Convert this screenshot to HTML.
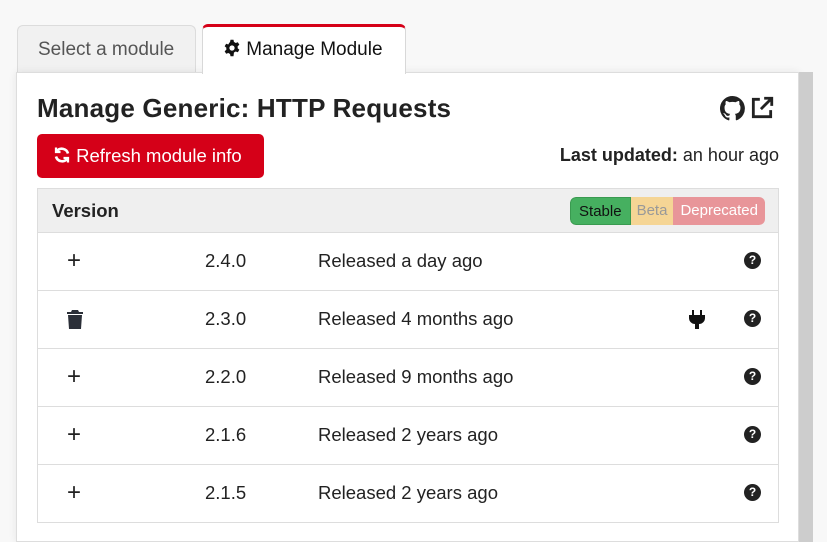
<!DOCTYPE html>
<html><head><style>
*{box-sizing:border-box;margin:0;padding:0}
body{width:827px;height:532px;overflow:hidden;background:#f8f8f8;font-family:"Liberation Sans",sans-serif;color:#222;position:relative}
.abs{position:absolute}
.tab1{left:17px;top:25px;width:179px;height:48px;background:#f1f1f1;border:1px solid #dcdcdc;border-bottom:none;border-radius:6px 6px 0 0;font-size:19px;color:#555;padding-left:20px;line-height:48px}
.tab2{left:202px;top:24px;width:204px;height:50px;background:#fff;border:1px solid #d8d8d8;border-top:3px solid #d50018;border-bottom:none;border-radius:6px 6px 0 0;font-size:19px;color:#111;padding-left:20px;line-height:46px;z-index:2}
.panel{left:16px;top:72px;width:783px;height:470px;background:#fff;border:1px solid #ddd;box-shadow:0 0 8px rgba(0,0,0,.08)}
.stripe{left:799px;top:72px;width:14px;height:470px;background:#cdcdcd}
h1{position:absolute;left:37px;top:93px;font-size:26px;font-weight:bold;color:#222;letter-spacing:.2px}
.btn{left:37px;top:134px;width:227px;height:44px;background:#d50018;border-radius:5px;color:#fff;font-size:18.5px;line-height:44px;padding-left:16px}
.upd{right:48px;top:145px;font-size:18px}
.table{left:37px;top:188px;width:742px;height:335px;border:1px solid #ddd}
.hdr{height:43px;background:#efefef;font-weight:bold;font-size:18.5px;line-height:44px;padding-left:14px;position:relative}
.row{height:58px;border-top:1px solid #ddd;position:relative;font-size:18.5px;line-height:56px}
.row .v{position:absolute;left:167px}
.row .r{position:absolute;left:280px}
.row .ic{position:absolute;left:29px;top:0}
.q{position:absolute;left:706px;top:19px;width:17px;height:17px;border-radius:50%;background:#222;color:#fff;font-size:12px;font-weight:bold;line-height:17px;text-align:center}
.badges{position:absolute;right:13px;top:8px;height:28px;display:flex;font-size:15px;font-weight:normal;line-height:28px;border-radius:6px;overflow:hidden}
</style></head><body>
<div class="abs tab1">Select a module</div>
<div class="abs tab2"><svg width="18" height="18" viewBox="0 0 24 24" style="vertical-align:-2px"><path fill="#111" d="M10 1h4l.6 3a8 8 0 0 1 2.3 1.300l2.900-1 2 3.400-2.300 2a8 8 0 0 1 0 2.600l2.300 2-2 3.400-2.900-1a8 8 0 0 1-2.300 1.300L14 23h-4l-.6-3a8 8 0 0 1-2.300-1.300l-2.900 1-2-3.400 2.300-2a8 8 0 0 1 0-2.600l-2.300-2 2-3.400 2.900 1A8 8 0 0 1 9.400 4zM12 8.500a3.500 3.500 0 1 0 0 7 3.500 3.500 0 0 0 0-7z"/></svg> Manage Module</div>
<div class="abs panel"></div>
<div class="abs stripe"></div>
<h1>Manage Generic: HTTP Requests</h1>
<svg class="abs" style="left:720px;top:96px" width="25" height="25" viewBox="0 0 16 16"><path fill="#222" d="M8 0a8 8 0 0 0-2.500 15.600c.4 0 .5-.2.5-.4v-1.500c-2.200.5-2.700-1-2.700-1-.4-.9-.9-1.200-.9-1.200-.7-.5.1-.5.1-.5.8.1 1.200.8 1.200.8.7 1.300 1.900.9 2.300.7.1-.5.3-.9.5-1.100-1.800-.2-3.600-.9-3.600-4 0-.9.3-1.600.8-2.100-.1-.2-.4-1 .1-2.100 0 0 .7-.2 2.200.8a7.500 7.500 0 0 1 4 0c1.500-1 2.200-.8 2.200-.8.4 1.100.2 1.900.1 2.100.5.6.8 1.300.8 2.100 0 3.100-1.900 3.800-3.600 4 .3.3.6.8.6 1.500v2.200c0 .2.1.5.6.4A8 8 0 0 0 8 0z"/></svg>
<svg class="abs" style="left:749px;top:95px" width="26" height="26" viewBox="0 0 24 24" fill="none" stroke="#222" stroke-width="2.6"><path d="M10 4H4v16h16v-6M14 3h7v7M21 3 11 13"/></svg>
<div class="abs btn"><svg width="18" height="18" viewBox="0 0 24 24" fill="none" stroke="#fff" stroke-width="3.5" style="vertical-align:-2px"><path d="M20 10A8.500 8.500 0 0 0 5 7M4 14a8.500 8.500 0 0 0 15 3"/><path d="M4 2v6h6M20 22v-6h-6" stroke-width="3"/></svg> Refresh module info</div>
<div class="abs upd"><b>Last updated:</b> an hour ago</div>
<div class="abs table">
<div class="hdr">Version
<div class="badges"><span style="background:#46b060;color:#111;padding:0 8px;border:1px solid #3a9a50;border-radius:6px 0 0 6px">Stable</span><span style="background:#f5d595;color:#999;padding:0 6px">Beta</span><span style="background:#e89599;color:#fff;padding:0 7px">Deprecated</span></div></div>
<div class="row"><span class="ic" style="font-size:24px">+</span><span class="v">2.4.0</span><span class="r">Released a day ago</span><span class="q">?</span></div>
<div class="row"><svg class="ic" style="top:19px" width="16" height="19" viewBox="0 0 16 19"><path fill="#2b2f38" d="M5 0h6l1 2h4v2H0V2h4zM1 5h14l-1 14H2z"/></svg><span class="v">2.3.0</span><span class="r">Released 4 months ago</span>
<svg style="position:absolute;left:651px;top:19px" width="16" height="19" viewBox="0 0 16 19"><path fill="#111" d="M3 0h2v5H3zM11 0h2v5h-2zM0 5h16v3a6 6 0 0 1-6 6v5H6v-5a6 6 0 0 1-6-6z"/></svg><span class="q">?</span></div>
<div class="row"><span class="ic" style="font-size:24px">+</span><span class="v">2.2.0</span><span class="r">Released 9 months ago</span><span class="q">?</span></div>
<div class="row"><span class="ic" style="font-size:24px">+</span><span class="v">2.1.6</span><span class="r">Released 2 years ago</span><span class="q">?</span></div>
<div class="row"><span class="ic" style="font-size:24px">+</span><span class="v">2.1.5</span><span class="r">Released 2 years ago</span><span class="q">?</span></div>
</div>
</body></html>
